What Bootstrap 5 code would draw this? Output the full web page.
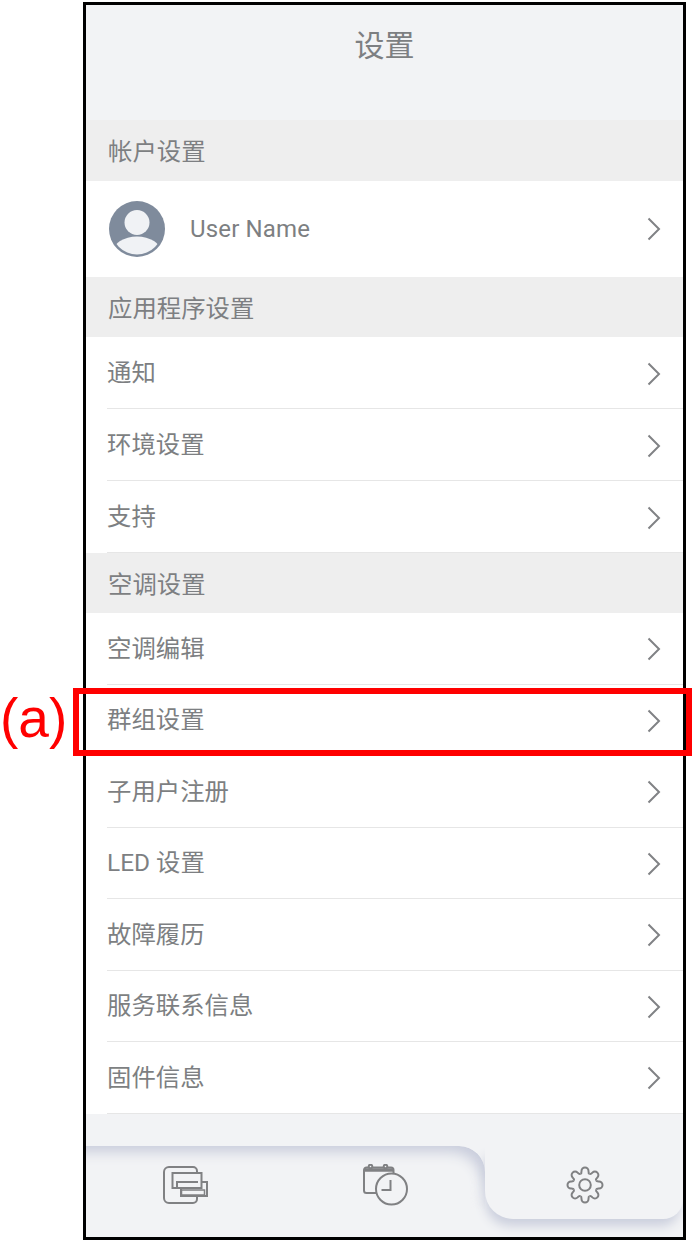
<!DOCTYPE html>
<html lang="zh">
<head>
<meta charset="utf-8">
<title>设置</title>
<link rel="stylesheet" href="https://cdn.jsdelivr.net/npm/bootstrap@5.3.0/dist/css/bootstrap.min.css">
<style>
html,body{background:#fff;margin:0}
body{font-family:Roboto,"Noto Sans CJK SC",sans-serif;color:#7d7f82;width:695px;height:1243px;overflow:hidden;position:relative}
.phone{margin:2px 0 0 83px;width:603px;height:1238px;border:3px solid #000;background:#f2f3f5;display:flex;flex-direction:column;overflow:hidden}
.top-title{height:115px;padding-top:19px;text-align:center;font-size:30px;line-height:44px;flex:none}
.sect{height:60px;background:#eeeeee;padding:2px 0 0 22px;font-size:24.4px;line-height:60px;flex:none}
.sect.tall{height:61px}
.rows{--bs-list-group-bg:#fff;--bs-list-group-color:#7d7f82;--bs-list-group-border-color:#e6e6e6;flex:none;background:#fff}
.rows .list-group-item{height:72px;padding:2px 22px 0 0;margin-left:21px;font-size:24.4px;background:transparent;border-width:0 0 1px}
.rows.dense .list-group-item{height:71.5px}
.rows .list-group-item:last-child{border-bottom-width:1px}
.user-row{height:96px;background:#fff;padding:0 22px 0 23px;flex:none;font-size:24px}
.user-row .uname{margin-left:25px;letter-spacing:.15px}
.chev{width:14px;height:24px;flex:none}
.tabbar{margin-top:32.5px;flex:1;display:flex;min-height:0}
.tab-rest{width:399px;flex:none;display:flex;align-items:flex-start;position:relative}
.tab-rest::before{content:"";position:absolute;left:0;right:0;top:0;height:64px;border-top-right-radius:26px;box-shadow:inset -9px 13px 13px -7px #c9cddc;-webkit-mask-image:linear-gradient(#000 45%,transparent);mask-image:linear-gradient(#000 45%,transparent)}
.tab-on{flex:1;height:73px;display:flex;justify-content:center;align-items:flex-start;padding:20px 0 0 2px;background:#f2f3f5;border-radius:0 0 20px 28px;box-shadow:-2px 9px 11px -2px #cbcfdd;position:relative}
.tab-cell{display:flex;justify-content:center;position:relative}
.tab-a{width:200px;padding-top:20px}
.tab-b{width:199px;padding-top:18px}
.ico{display:block;fill:none;stroke:#808183;stroke-width:2}
.mark-box{position:absolute;left:73px;top:688px;width:619px;height:68px;border:6px solid #ff0000}
.mark-label{position:absolute;left:0;top:688px;font-family:"Liberation Sans",Arial,sans-serif;font-size:55px;line-height:60px;color:#ff0000}
</style>
</head>
<body>
<div class="phone">
  <div class="top-title">设置</div>
  <div class="sect tall">帐户设置</div>
  <div class="user-row d-flex align-items-center">
    <svg width="56" height="56" viewBox="0 0 56 56" class="flex-none">
      <defs><clipPath id="av"><circle cx="28" cy="28" r="25.5"/></clipPath></defs>
      <circle cx="28" cy="28" r="28" fill="#7f8b9c"/>
      <circle cx="28" cy="21.5" r="12.5" fill="#f0f2f5"/>
      <ellipse cx="28" cy="51" rx="24" ry="15.5" fill="#f0f2f5" clip-path="url(#av)"/>
    </svg>
    <span class="uname flex-grow-1">User Name</span>
    <svg class="chev" viewBox="0 0 14 24"><path d="M1.5 1.5 12 12 1.5 22.5" fill="none" stroke="#808285" stroke-width="2"/></svg>
  </div>
  <div class="sect">应用程序设置</div>
  <div class="list-group list-group-flush rows">
    <div class="list-group-item d-flex justify-content-between align-items-center">通知<svg class="chev" viewBox="0 0 14 24"><path d="M1.5 1.5 12 12 1.5 22.5" fill="none" stroke="#808285" stroke-width="2"/></svg></div>
    <div class="list-group-item d-flex justify-content-between align-items-center">环境设置<svg class="chev" viewBox="0 0 14 24"><path d="M1.5 1.5 12 12 1.5 22.5" fill="none" stroke="#808285" stroke-width="2"/></svg></div>
    <div class="list-group-item d-flex justify-content-between align-items-center">支持<svg class="chev" viewBox="0 0 14 24"><path d="M1.5 1.5 12 12 1.5 22.5" fill="none" stroke="#808285" stroke-width="2"/></svg></div>
  </div>
  <div class="sect">空调设置</div>
  <div class="list-group list-group-flush rows dense">
    <div class="list-group-item d-flex justify-content-between align-items-center">空调编辑<svg class="chev" viewBox="0 0 14 24"><path d="M1.5 1.5 12 12 1.5 22.5" fill="none" stroke="#808285" stroke-width="2"/></svg></div>
    <div class="list-group-item d-flex justify-content-between align-items-center">群组设置<svg class="chev" viewBox="0 0 14 24"><path d="M1.5 1.5 12 12 1.5 22.5" fill="none" stroke="#808285" stroke-width="2"/></svg></div>
    <div class="list-group-item d-flex justify-content-between align-items-center">子用户注册<svg class="chev" viewBox="0 0 14 24"><path d="M1.5 1.5 12 12 1.5 22.5" fill="none" stroke="#808285" stroke-width="2"/></svg></div>
    <div class="list-group-item d-flex justify-content-between align-items-center">LED 设置<svg class="chev" viewBox="0 0 14 24"><path d="M1.5 1.5 12 12 1.5 22.5" fill="none" stroke="#808285" stroke-width="2"/></svg></div>
    <div class="list-group-item d-flex justify-content-between align-items-center">故障履历<svg class="chev" viewBox="0 0 14 24"><path d="M1.5 1.5 12 12 1.5 22.5" fill="none" stroke="#808285" stroke-width="2"/></svg></div>
    <div class="list-group-item d-flex justify-content-between align-items-center">服务联系信息<svg class="chev" viewBox="0 0 14 24"><path d="M1.5 1.5 12 12 1.5 22.5" fill="none" stroke="#808285" stroke-width="2"/></svg></div>
    <div class="list-group-item d-flex justify-content-between align-items-center">固件信息<svg class="chev" viewBox="0 0 14 24"><path d="M1.5 1.5 12 12 1.5 22.5" fill="none" stroke="#808285" stroke-width="2"/></svg></div>
  </div>
  <div class="tabbar">
    <div class="tab-rest">
      <div class="tab-cell tab-a">
        <svg class="ico" width="46" height="38" viewBox="0 0 46 38">
          <path d="M34 30.5V33a4 4 0 0 1-4 4H6a5 5 0 0 1-5-5V6a5 5 0 0 1 5-5h24a4 4 0 0 1 4 4v2"/>
          <rect x="9.500" y="7" width="29" height="15"/>
          <path d="M14 22v-6h21M39 16h5v14H18V22"/>
          <rect x="18.500" y="24" width="23" height="5" stroke-width="1.500"/>
        </svg>
      </div>
      <div class="tab-cell tab-b">
        <svg class="ico" width="46" height="42" viewBox="0 0 46 42">
          <path d="M14 29H3.500a2.500 2.500 0 0 1-2.500-2.500V6a2.500 2.500 0 0 1 2.500-2.500h24.500a2.500 2.500 0 0 1 2.500 2.500v4"/>
          <path d="M1 6h29.500" stroke-width="3.500"/>
          <circle cx="7.500" cy="2.500" r="1.800" fill="#f2f3f5"/>
          <circle cx="22.500" cy="2.500" r="1.800" fill="#f2f3f5"/>
          <circle cx="28.500" cy="25" r="15.500" fill="#f2f3f5"/>
          <path d="M27.500 16v10h-9"/>
        </svg>
      </div>
    </div>
    <div class="tab-on">
      <svg class="ico" width="38" height="38" viewBox="-19 -19 38 38">
        <circle r="5.800"/>
        <g id="teeth"><path d="M-4.600-11.100Q-3.300-11.600-3.500-14A3.500 3.500 0 0 1 3.500-14Q3.300-11.600 4.600-11.100"/></g>
        <use href="#teeth" transform="rotate(45)"/>
        <use href="#teeth" transform="rotate(90)"/>
        <use href="#teeth" transform="rotate(135)"/>
        <use href="#teeth" transform="rotate(180)"/>
        <use href="#teeth" transform="rotate(225)"/>
        <use href="#teeth" transform="rotate(270)"/>
        <use href="#teeth" transform="rotate(315)"/>
      </svg>
    </div>
  </div>
</div>
<div class="mark-box"></div>
<div class="mark-label">(a)</div>
<script src="https://cdn.jsdelivr.net/npm/bootstrap@5.3.0/dist/js/bootstrap.bundle.min.js"></script>
</body>
</html>
